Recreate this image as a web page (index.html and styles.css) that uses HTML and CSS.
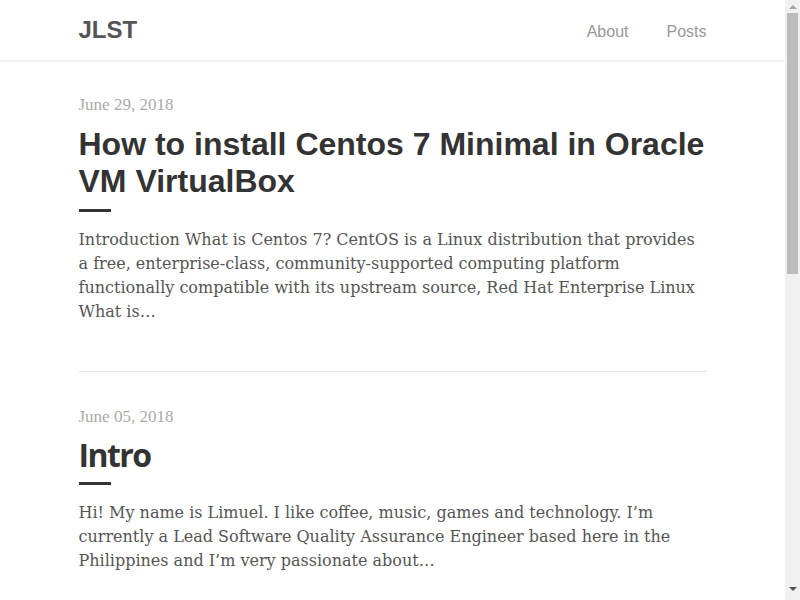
FILE: index.html
```html
<!DOCTYPE html>
<html>
<head>
<meta charset="utf-8">
<link rel="stylesheet" href="styles.css">
</head>
<body>
<div class="viewport">
  <div class="page">
    <header class="site-header">
      <div class="wrap header-inner">
        <a class="brand" href="#">JLST</a>
        <nav class="nav">
          <a href="#">About</a>
          <a href="#">Posts</a>
        </nav>
      </div>
    </header>
    <main class="wrap posts">
      <article class="post">
        <div class="date">June 29, 2018</div>
        <h2 class="title">How to install Centos 7 Minimal in Oracle VM VirtualBox</h2>
        <div class="bar"></div>
        <p class="excerpt">Introduction What is Centos 7? CentOS is a Linux distribution that provides a free, enterprise-class, community-supported computing platform functionally compatible with its upstream source, Red Hat Enterprise Linux What is…</p>
      </article>
      <article class="post">
        <div class="date">June 05, 2018</div>
        <h2 class="title alt">Intro</h2>
        <div class="bar alt-bar"></div>
        <p class="excerpt">Hi! My name is Limuel. I like coffee, music, games and technology. I’m currently a Lead Software Quality Assurance Engineer based here in the Philippines and I’m very passionate about…</p>
      </article>
    </main>
  </div>
  <div class="scrollbar">
    <div class="arrow up"></div>
    <div class="track"><div class="thumb"></div></div>
    <div class="arrow down"></div>
  </div>
</div>
</body>
</html>
```

FILE: styles.css
```css
html, body { margin: 0; padding: 0; height: 100%; overflow: hidden; }
body { background: #fff; color: #555; font-family: "DejaVu Serif", serif; }
a { text-decoration: none; }
.viewport { display: flex; height: 600px; }
.page { flex: 1; height: 600px; overflow: hidden; }
.wrap { max-width: 628px; margin: 0 auto; }
.site-header { height: 61px; box-shadow: 0 1px 2px rgba(0,0,0,0.06); border-bottom: 1px solid #eee; box-sizing: border-box; }
.header-inner { display: flex; justify-content: space-between; align-items: center; height: 60px; }
.brand { font-family: "Liberation Sans", Arial, sans-serif; font-weight: bold; font-size: 24px; color: #555; margin-top: -1px; }
.nav { display: flex; gap: 38px; margin-top: 4px; }
.nav a { font-family: "Liberation Sans", Arial, sans-serif; font-size: 16px; color: #999; }
.posts { padding-top: 32px; }
.post { border-bottom: 1px solid #e5e5e5; padding-bottom: 47px; margin-bottom: 33px; }
.date { font-family: "Liberation Serif", serif; font-size: 17px; color: #aaa; line-height: 24px; }
.title { font-family: "Liberation Sans", Arial, sans-serif; font-weight: bold; font-size: 32px; line-height: 37px; color: #333; margin: 9px 0 0; }
.title.alt { font-family: "Open Sans", sans-serif; font-weight: 700; letter-spacing: -1.6px; margin-top: 7px; }
.bar { width: 32px; height: 3px; background: #333; margin-top: 9px; }
.excerpt { font-family: "DejaVu Serif", serif; font-size: 16px; line-height: 24px; color: #555; margin: 16px 0 0; }
.scrollbar { width: 15px; height: 600px; background: #f1f1f1; display: flex; flex-direction: column; }
.arrow { height: 13px; display: flex; align-items: center; justify-content: center; }
.arrow.up::before { content: ""; border-left: 4px solid transparent; border-right: 4px solid transparent; border-bottom: 4px solid #a3a3a3; }
.arrow.down { height: 15px; align-items: flex-start; }
.arrow.down::before { content: ""; border-left: 4px solid transparent; border-right: 4px solid transparent; border-top: 4px solid #505050; margin-top: 2px; }
.track { flex: 1; padding: 0 2px; }
.thumb { height: 261px; background: #bcbcbc; }
```
